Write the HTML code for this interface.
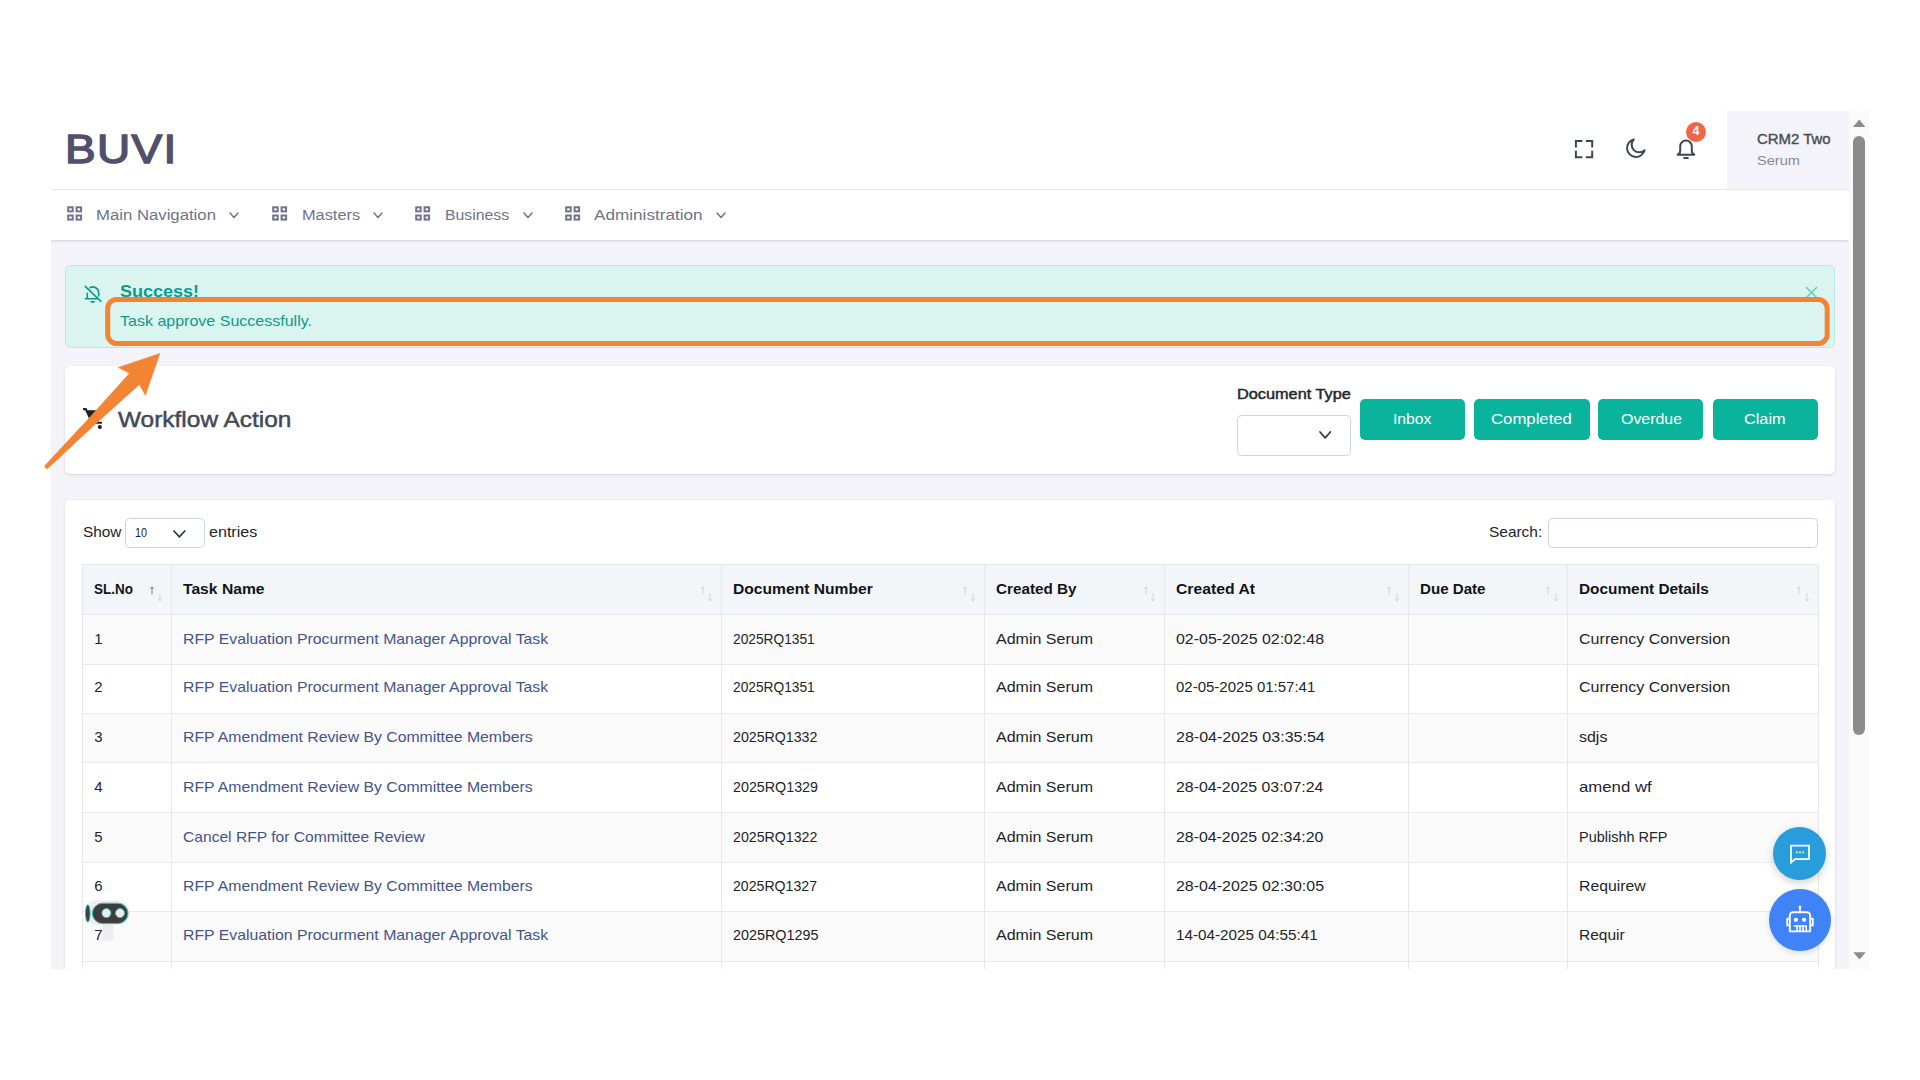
<!DOCTYPE html>
<html lang="en"><head><meta charset="utf-8"><title>Workflow Action</title><style>
html,body{margin:0;padding:0;background:#fff}
body{width:1920px;height:1080px;position:relative;overflow:hidden;font-family:"Liberation Sans",sans-serif}
.t{position:absolute;white-space:pre;display:block;transform-origin:0 0}
.ic{position:absolute;display:block;overflow:visible}
a{text-decoration:none}
h4,label,strong{margin:0;font-weight:400}
button{border:0;padding:0;margin:0;font:inherit;display:block}
input{margin:0;padding:0;outline:0;font:inherit;display:block}
.dt,.dt thead,.dt tbody,.dt tr,.dt th,.dt td{display:contents}
</style></head><body>
<div id="shot" style="position:absolute;left:0;top:0;width:1920px;height:969px;overflow:hidden;clip-path:inset(111px 51px 0 51px)">
<div style="position:absolute;left:51.00px;top:111.00px;width:1798.00px;height:858.00px;background:#f3f3f9"></div>
<header>
<div class="hdr" style="position:absolute;left:51.00px;top:111.00px;width:1798.00px;height:78.00px;background:#fff;border-bottom:1px solid #e9ebec"></div>
<div class="user" style="position:absolute;left:1727.00px;top:111.00px;width:122.00px;height:78.40px;background:#f3f3f9"></div>
<a class="t logo" style="left:65.14px;top:126px;line-height:46px;font-size:41.2px;color:#54506b;letter-spacing:1.200px;-webkit-text-stroke:1.5px #54506b;transform:scaleX(1.1149);">BUVI</a>
<span class="t" style="left:1757.22px;top:132px;line-height:16px;font-size:13.8px;color:#495057;-webkit-text-stroke:0.4px #495057;transform:scaleX(1.0835);">CRM2 Two</span>
<span class="t" style="left:1757.00px;top:154px;line-height:14px;font-size:12.6px;color:#878a99;transform:scaleX(1.1588);">Serum</span>
<svg class="ic" style="left:1572.1px;top:136.7px" width="24" height="24" viewBox="0 0 24 24" fill="none" stroke="#3e4652" stroke-width="2" stroke-linecap="butt"><path d="M3.9 10.4V3.9h6.5M13.8 3.9h6.4v6.5M20.2 13.8v6.4h-6.4M10.4 20.2H3.9v-6.4"/></svg>
<svg class="ic" style="left:1622.6px;top:136.4px" width="24" height="24" viewBox="0 0 24 24" fill="none" stroke="#3e4652" stroke-width="2" stroke-linejoin="round"><path d="M10.9 3.4a8.9 8.9 0 1 0 10.7 10.7 7.4 7.4 0 0 1-10.7-10.7z"/></svg>
<svg class="ic" style="left:1673.6px;top:136.9px" width="24" height="24" viewBox="0 0 24 24" fill="none" stroke="#3e4652" stroke-width="2" stroke-linejoin="round" stroke-linecap="round"><path d="M3.7 17.7c1.6-.7 2.5-1.7 2.5-3.6V9.3a5.8 5.8 0 0 1 11.6 0v4.8c0 1.9.9 2.9 2.5 3.6z"/><path d="M10.2 21.1h3.6"/></svg>
<div style="position:absolute;left:1685.90px;top:122.20px;width:20.20px;height:20.20px;background:#f06548;border-radius:50%"></div>
<span class="t" style="left:1692.60px;top:124px;line-height:14px;font-size:12.4px;color:#fff;font-weight:700;">4</span>
</header>
<nav>
<div class="nav" style="position:absolute;left:51.00px;top:190.00px;width:1798.00px;height:50.00px;background:#fff;box-shadow:0 1px 2.5px rgba(56,65,74,.18)"></div>
<svg class="ic" style="left:66.6px;top:206.4px" width="15.6" height="15" viewBox="0 0 15.6 15" fill="none" stroke="#70738a" stroke-width="2"><rect x="1.2" y="1.3" width="4.5" height="4.1"/><rect x="9.6" y="1.3" width="4.5" height="4.1"/><rect x="1.2" y="9.5" width="4.5" height="4.1"/><rect x="9.6" y="9.5" width="4.5" height="4.1"/></svg>
<a class="t" style="left:96.30px;top:206px;line-height:17px;font-size:15.4px;color:#70738a;transform:scaleX(1.0868);">Main Navigation</a>
<svg class="ic" style="left:228.2px;top:211.4px" width="12.0" height="8.4" viewBox="-2 -2 12.0 8.4" fill="none" stroke="#70738a" stroke-width="1.5" stroke-linecap="round" stroke-linejoin="round"><path d="M0 0L4.00 4.40L8.00 0"/></svg>
<svg class="ic" style="left:271.9px;top:206.4px" width="15.6" height="15" viewBox="0 0 15.6 15" fill="none" stroke="#70738a" stroke-width="2"><rect x="1.2" y="1.3" width="4.5" height="4.1"/><rect x="9.6" y="1.3" width="4.5" height="4.1"/><rect x="1.2" y="9.5" width="4.5" height="4.1"/><rect x="9.6" y="9.5" width="4.5" height="4.1"/></svg>
<a class="t" style="left:301.60px;top:206px;line-height:17px;font-size:15.4px;color:#70738a;transform:scaleX(1.0609);">Masters</a>
<svg class="ic" style="left:371.8px;top:211.4px" width="12.0" height="8.4" viewBox="-2 -2 12.0 8.4" fill="none" stroke="#70738a" stroke-width="1.5" stroke-linecap="round" stroke-linejoin="round"><path d="M0 0L4.00 4.40L8.00 0"/></svg>
<svg class="ic" style="left:415.4px;top:206.4px" width="15.6" height="15" viewBox="0 0 15.6 15" fill="none" stroke="#70738a" stroke-width="2"><rect x="1.2" y="1.3" width="4.5" height="4.1"/><rect x="9.6" y="1.3" width="4.5" height="4.1"/><rect x="1.2" y="9.5" width="4.5" height="4.1"/><rect x="9.6" y="9.5" width="4.5" height="4.1"/></svg>
<a class="t" style="left:445.30px;top:206px;line-height:17px;font-size:15.4px;color:#70738a;transform:scaleX(1.0257);">Business</a>
<svg class="ic" style="left:521.8px;top:211.4px" width="12.0" height="8.4" viewBox="-2 -2 12.0 8.4" fill="none" stroke="#70738a" stroke-width="1.5" stroke-linecap="round" stroke-linejoin="round"><path d="M0 0L4.00 4.40L8.00 0"/></svg>
<svg class="ic" style="left:564.7px;top:206.4px" width="15.6" height="15" viewBox="0 0 15.6 15" fill="none" stroke="#70738a" stroke-width="2"><rect x="1.2" y="1.3" width="4.5" height="4.1"/><rect x="9.6" y="1.3" width="4.5" height="4.1"/><rect x="1.2" y="9.5" width="4.5" height="4.1"/><rect x="9.6" y="9.5" width="4.5" height="4.1"/></svg>
<a class="t" style="left:593.80px;top:206px;line-height:17px;font-size:15.4px;color:#70738a;transform:scaleX(1.1140);">Administration</a>
<svg class="ic" style="left:715.0px;top:211.4px" width="12.0" height="8.4" viewBox="-2 -2 12.0 8.4" fill="none" stroke="#70738a" stroke-width="1.5" stroke-linecap="round" stroke-linejoin="round"><path d="M0 0L4.00 4.40L8.00 0"/></svg>
</nav>
<main>
<section class="alert-wrap" role="alert">
<div class="alert" style="position:absolute;left:65.30px;top:265.00px;width:1769.50px;height:82.90px;box-sizing:border-box;background:#daf4f0;border:1px solid #b9e9e2;border-radius:5px"></div>
<svg class="ic" style="left:83px;top:284px" width="20" height="20" viewBox="0 0 20 20" fill="none" stroke="#0c9b88" stroke-width="1.6" stroke-linecap="round" stroke-linejoin="round"><path d="M4.3 14.7V9.4M6.9 3.9a5.7 5.7 0 0 1 8.8 4.8v3.4M2.4 14.8h11.4M8.3 17.9h2.8M2.2 2.4L17.9 17.3"/></svg>
<strong class="t" style="left:119.90px;top:282px;line-height:18px;font-size:16.2px;color:#0c9b88;font-weight:700;transform:scaleX(1.1117);">Success!</strong>
<span class="t" style="left:119.70px;top:312px;line-height:17px;font-size:15px;color:#0c9b88;transform:scaleX(1.0678);">Task approve Successfully.</span>
<svg class="ic" style="left:1805.4px;top:285.9px" width="13" height="13" viewBox="0 0 13 13" fill="none" stroke="#63cdbd" stroke-width="1.5"><path d="M1 1l11 11M12 1L1 12"/></svg>
</section>
<section class="card-wrap">
<div class="card" style="position:absolute;left:65.30px;top:366.30px;width:1769.50px;height:107.70px;background:#fff;border-radius:5px;box-shadow:0 1px 2.5px rgba(56,65,74,.16)"></div>
<svg class="ic" style="left:82.05px;top:406.1px" width="25.2" height="25.2" viewBox="0 0 24 24" fill="#1d2228"><path d="M17,18C15.89,18 15,18.89 15,20A2,2 0 0,0 17,22A2,2 0 0,0 19,20C19,18.89 18.1,18 17,18M1,2V4H3L6.6,11.59L5.24,14.04C5.09,14.32 5,14.65 5,15A2,2 0 0,0 7,17H19V15H7.42A0.25,0.25 0 0,1 7.17,14.75C7.17,14.7 7.18,14.66 7.2,14.63L8.1,13H15.55C16.3,13 16.96,12.58 17.3,11.97L20.88,5.5C20.95,5.34 21,5.17 21,5A1,1 0 0,0 20,4H5.21L4.27,2M7,18C5.89,18 5,18.89 5,20A2,2 0 0,0 7,22A2,2 0 0,0 9,20C9,18.89 8.1,18 7,18Z"/></svg>
<h4 class="t" style="left:117.56px;top:408px;line-height:23px;font-size:21.2px;color:#414957;-webkit-text-stroke:0.45px #414957;transform:scaleX(1.1534);">Workflow Action</h4>
<label class="t" style="left:1237.15px;top:386px;line-height:16px;font-size:14.6px;color:#22262b;-webkit-text-stroke:0.45px #22262b;transform:scaleX(1.1164);">Document Type</label>
<div class="sel" style="position:absolute;left:1237.00px;top:414.60px;width:113.60px;height:41.20px;box-sizing:border-box;background:#fff;border:1px solid #ced4da;border-radius:4.5px"></div>
<svg class="ic" style="left:1317.8px;top:430.1px" width="14.4" height="9.8" viewBox="-2 -2 14.4 9.8" fill="none" stroke="#343a40" stroke-width="1.75" stroke-linecap="round" stroke-linejoin="round"><path d="M0 0L5.20 5.80L10.40 0"/></svg>
<button class="btn" type="button" style="position:absolute;left:1360.40px;top:399.40px;width:104.80px;height:41.00px;background:#0ab39c;border-radius:5px"><span class="t" style="left:33.00px;top:10.600000000000023px;line-height:17px;font-size:15.2px;color:#fff;transform:scaleX(1.0355);">Inbox</span></button>
<button class="btn" type="button" style="position:absolute;left:1474.00px;top:399.40px;width:116.00px;height:41.00px;background:#0ab39c;border-radius:5px"><span class="t" style="left:17.30px;top:10.600000000000023px;line-height:17px;font-size:15.2px;color:#fff;transform:scaleX(1.1019);">Completed</span></button>
<button class="btn" type="button" style="position:absolute;left:1598.00px;top:399.40px;width:105.00px;height:41.00px;background:#0ab39c;border-radius:5px"><span class="t" style="left:22.70px;top:10.600000000000023px;line-height:17px;font-size:15.2px;color:#fff;transform:scaleX(1.0482);">Overdue</span></button>
<button class="btn" type="button" style="position:absolute;left:1713.00px;top:399.40px;width:105.00px;height:41.00px;background:#0ab39c;border-radius:5px"><span class="t" style="left:31.40px;top:10.600000000000023px;line-height:17px;font-size:15.2px;color:#fff;transform:scaleX(1.0708);">Claim</span></button>
</section>
<section class="card-wrap">
<div class="card" style="position:absolute;left:65.30px;top:500.30px;width:1769.50px;height:499.70px;background:#fff;border-radius:5px;box-shadow:0 1px 2.5px rgba(56,65,74,.16)"></div>
<label class="t" style="left:82.50px;top:523px;line-height:17px;font-size:15px;color:#212529;transform:scaleX(1.0250);">Show</label>
<div class="sel" style="position:absolute;left:125.00px;top:518.20px;width:79.60px;height:30.20px;box-sizing:border-box;background:#fff;border:1px solid #ced4da;border-radius:4.5px"></div>
<span class="t" style="left:135.00px;top:526px;line-height:14px;font-size:12.4px;color:#212529;transform:scaleX(0.8703);">10</span>
<svg class="ic" style="left:172.0px;top:528.7px" width="14.8" height="9.9" viewBox="-2 -2 14.8 9.9" fill="none" stroke="#343a40" stroke-width="1.75" stroke-linecap="round" stroke-linejoin="round"><path d="M0 0L5.40 5.90L10.80 0"/></svg>
<label class="t" style="left:209.00px;top:523px;line-height:17px;font-size:15px;color:#212529;transform:scaleX(1.0719);">entries</label>
<label class="t" style="left:1488.80px;top:523px;line-height:17px;font-size:15px;color:#212529;transform:scaleX(1.0292);">Search:</label>
<input class="inp" type="search" aria-label="Search" style="position:absolute;left:1548.40px;top:518.00px;width:269.40px;height:30.40px;box-sizing:border-box;background:#fff;border:1px solid #ced4da;border-radius:4.5px">
<div class="thead" style="position:absolute;left:82.00px;top:564.30px;width:1736.00px;height:49.90px;background:#f3f6f9"></div>
<div class="odd" style="position:absolute;left:82.00px;top:614.30px;width:1736.00px;height:49.70px;background:#fafafa"></div>
<div class="odd" style="position:absolute;left:82.00px;top:713.60px;width:1736.00px;height:49.10px;background:#fafafa"></div>
<div class="odd" style="position:absolute;left:82.00px;top:812.30px;width:1736.00px;height:49.90px;background:#fafafa"></div>
<div class="odd" style="position:absolute;left:82.00px;top:911.70px;width:1736.00px;height:49.30px;background:#fafafa"></div>
<div class="hl" style="position:absolute;left:82.00px;top:564.00px;width:1736.00px;height:1.00px;background:#e6e8ea"></div>
<div class="hl" style="position:absolute;left:82.00px;top:614.00px;width:1736.00px;height:1.00px;background:#e6e8ea"></div>
<div class="hl" style="position:absolute;left:82.00px;top:664.00px;width:1736.00px;height:1.00px;background:#e6e8ea"></div>
<div class="hl" style="position:absolute;left:82.00px;top:713.00px;width:1736.00px;height:1.00px;background:#e6e8ea"></div>
<div class="hl" style="position:absolute;left:82.00px;top:762.00px;width:1736.00px;height:1.00px;background:#e6e8ea"></div>
<div class="hl" style="position:absolute;left:82.00px;top:812.00px;width:1736.00px;height:1.00px;background:#e6e8ea"></div>
<div class="hl" style="position:absolute;left:82.00px;top:862.00px;width:1736.00px;height:1.00px;background:#e6e8ea"></div>
<div class="hl" style="position:absolute;left:82.00px;top:911.00px;width:1736.00px;height:1.00px;background:#e6e8ea"></div>
<div class="hl" style="position:absolute;left:82.00px;top:961.00px;width:1736.00px;height:1.00px;background:#e6e8ea"></div>
<div class="vl" style="position:absolute;left:82.00px;top:564.30px;width:1.00px;height:435.70px;background:#e6e8ea"></div>
<div class="vl" style="position:absolute;left:171.00px;top:564.30px;width:1.00px;height:435.70px;background:#e6e8ea"></div>
<div class="vl" style="position:absolute;left:721.00px;top:564.30px;width:1.00px;height:435.70px;background:#e6e8ea"></div>
<div class="vl" style="position:absolute;left:984.00px;top:564.30px;width:1.00px;height:435.70px;background:#e6e8ea"></div>
<div class="vl" style="position:absolute;left:1164.00px;top:564.30px;width:1.00px;height:435.70px;background:#e6e8ea"></div>
<div class="vl" style="position:absolute;left:1408.00px;top:564.30px;width:1.00px;height:435.70px;background:#e6e8ea"></div>
<div class="vl" style="position:absolute;left:1567.00px;top:564.30px;width:1.00px;height:435.70px;background:#e6e8ea"></div>
<div class="vl" style="position:absolute;left:1818.00px;top:564.30px;width:1.00px;height:435.70px;background:#e6e8ea"></div>
<table class="dt"><thead><tr>
<th><span class="t" style="left:94.10px;top:581px;line-height:16px;font-size:14.6px;color:#111418;font-weight:700;transform:scaleX(0.9223);">SL.No</span><svg class="ic" style="left:149.3px;top:584.6px" width="6" height="11" viewBox="0 0 6 11" fill="none" stroke="#6c7886" stroke-width="0.95"><path d="M3 9.4V2M1.3 3.7L3 1.8l1.7 1.9"/></svg><svg class="ic" style="left:157.0px;top:591.6px" width="6" height="11" viewBox="0 0 6 11" fill="none" stroke="#ced1d6" stroke-width="0.95"><path d="M3 1.4V8.8M1.3 7.1L3 9l1.7-1.9"/></svg></th>
<th><span class="t" style="left:182.80px;top:581px;line-height:16px;font-size:14.6px;color:#111418;font-weight:700;transform:scaleX(1.0734);">Task Name</span><svg class="ic" style="left:699.6px;top:584.6px" width="6" height="11" viewBox="0 0 6 11" fill="none" stroke="#ced1d6" stroke-width="0.95"><path d="M3 9.4V2M1.3 3.7L3 1.8l1.7 1.9"/></svg><svg class="ic" style="left:707.3px;top:591.6px" width="6" height="11" viewBox="0 0 6 11" fill="none" stroke="#ced1d6" stroke-width="0.95"><path d="M3 1.4V8.8M1.3 7.1L3 9l1.7-1.9"/></svg></th>
<th><span class="t" style="left:733.40px;top:581px;line-height:16px;font-size:14.6px;color:#111418;font-weight:700;transform:scaleX(1.0705);">Document Number</span><svg class="ic" style="left:962.3px;top:584.6px" width="6" height="11" viewBox="0 0 6 11" fill="none" stroke="#ced1d6" stroke-width="0.95"><path d="M3 9.4V2M1.3 3.7L3 1.8l1.7 1.9"/></svg><svg class="ic" style="left:970.0px;top:591.6px" width="6" height="11" viewBox="0 0 6 11" fill="none" stroke="#ced1d6" stroke-width="0.95"><path d="M3 1.4V8.8M1.3 7.1L3 9l1.7-1.9"/></svg></th>
<th><span class="t" style="left:996.40px;top:581px;line-height:16px;font-size:14.6px;color:#111418;font-weight:700;transform:scaleX(1.0456);">Created By</span><svg class="ic" style="left:1142.6px;top:584.6px" width="6" height="11" viewBox="0 0 6 11" fill="none" stroke="#ced1d6" stroke-width="0.95"><path d="M3 9.4V2M1.3 3.7L3 1.8l1.7 1.9"/></svg><svg class="ic" style="left:1150.3px;top:591.6px" width="6" height="11" viewBox="0 0 6 11" fill="none" stroke="#ced1d6" stroke-width="0.95"><path d="M3 1.4V8.8M1.3 7.1L3 9l1.7-1.9"/></svg></th>
<th><span class="t" style="left:1175.80px;top:581px;line-height:16px;font-size:14.6px;color:#111418;font-weight:700;transform:scaleX(1.0792);">Created At</span><svg class="ic" style="left:1386.0px;top:584.6px" width="6" height="11" viewBox="0 0 6 11" fill="none" stroke="#ced1d6" stroke-width="0.95"><path d="M3 9.4V2M1.3 3.7L3 1.8l1.7 1.9"/></svg><svg class="ic" style="left:1393.7px;top:591.6px" width="6" height="11" viewBox="0 0 6 11" fill="none" stroke="#ced1d6" stroke-width="0.95"><path d="M3 1.4V8.8M1.3 7.1L3 9l1.7-1.9"/></svg></th>
<th><span class="t" style="left:1420.20px;top:581px;line-height:16px;font-size:14.6px;color:#111418;font-weight:700;transform:scaleX(1.0349);">Due Date</span><svg class="ic" style="left:1545.0px;top:584.6px" width="6" height="11" viewBox="0 0 6 11" fill="none" stroke="#ced1d6" stroke-width="0.95"><path d="M3 9.4V2M1.3 3.7L3 1.8l1.7 1.9"/></svg><svg class="ic" style="left:1552.7px;top:591.6px" width="6" height="11" viewBox="0 0 6 11" fill="none" stroke="#ced1d6" stroke-width="0.95"><path d="M3 1.4V8.8M1.3 7.1L3 9l1.7-1.9"/></svg></th>
<th><span class="t" style="left:1578.60px;top:581px;line-height:16px;font-size:14.6px;color:#111418;font-weight:700;transform:scaleX(1.0534);">Document Details</span><svg class="ic" style="left:1796.0px;top:584.6px" width="6" height="11" viewBox="0 0 6 11" fill="none" stroke="#ced1d6" stroke-width="0.95"><path d="M3 9.4V2M1.3 3.7L3 1.8l1.7 1.9"/></svg><svg class="ic" style="left:1803.7px;top:591.6px" width="6" height="11" viewBox="0 0 6 11" fill="none" stroke="#ced1d6" stroke-width="0.95"><path d="M3 1.4V8.8M1.3 7.1L3 9l1.7-1.9"/></svg></th>
</tr></thead><tbody>
<tr><td><span class="t" style="left:94.20px;top:630px;line-height:17px;font-size:15px;color:#212529;">1</span></td><td><a class="t" style="left:182.60px;top:630px;line-height:17px;font-size:15px;color:#43548d;transform:scaleX(1.0545);">RFP Evaluation Procurment Manager Approval Task</a></td><td><span class="t" style="left:733.40px;top:630px;line-height:17px;font-size:15px;color:#212529;transform:scaleX(0.9156);">2025RQ1351</span></td><td><span class="t" style="left:996.40px;top:630px;line-height:17px;font-size:15px;color:#212529;transform:scaleX(1.0675);">Admin Serum</span></td><td><span class="t" style="left:1176.00px;top:630px;line-height:17px;font-size:15px;color:#212529;transform:scaleX(1.0625);">02-05-2025 02:02:48</span></td><td></td><td><span class="t" style="left:1578.60px;top:630px;line-height:17px;font-size:15px;color:#212529;transform:scaleX(1.0724);">Currency Conversion</span></td></tr>
<tr><td><span class="t" style="left:94.20px;top:678px;line-height:17px;font-size:15px;color:#212529;">2</span></td><td><a class="t" style="left:182.60px;top:678px;line-height:17px;font-size:15px;color:#43548d;transform:scaleX(1.0545);">RFP Evaluation Procurment Manager Approval Task</a></td><td><span class="t" style="left:733.40px;top:678px;line-height:17px;font-size:15px;color:#212529;transform:scaleX(0.9156);">2025RQ1351</span></td><td><span class="t" style="left:996.40px;top:678px;line-height:17px;font-size:15px;color:#212529;transform:scaleX(1.0675);">Admin Serum</span></td><td><span class="t" style="left:1176.00px;top:678px;line-height:17px;font-size:15px;color:#212529;">02-05-2025 01:57:41</span></td><td></td><td><span class="t" style="left:1578.60px;top:678px;line-height:17px;font-size:15px;color:#212529;transform:scaleX(1.0724);">Currency Conversion</span></td></tr>
<tr><td><span class="t" style="left:94.20px;top:728px;line-height:17px;font-size:15px;color:#212529;">3</span></td><td><a class="t" style="left:182.60px;top:728px;line-height:17px;font-size:15px;color:#43548d;transform:scaleX(1.0523);">RFP Amendment Review By Committee Members</a></td><td><span class="t" style="left:733.40px;top:728px;line-height:17px;font-size:15px;color:#212529;transform:scaleX(0.9458);">2025RQ1332</span></td><td><span class="t" style="left:996.40px;top:728px;line-height:17px;font-size:15px;color:#212529;transform:scaleX(1.0675);">Admin Serum</span></td><td><span class="t" style="left:1176.00px;top:728px;line-height:17px;font-size:15px;color:#212529;transform:scaleX(1.0676);">28-04-2025 03:35:54</span></td><td></td><td><span class="t" style="left:1578.60px;top:728px;line-height:17px;font-size:15px;color:#212529;transform:scaleX(1.0649);">sdjs</span></td></tr>
<tr><td><span class="t" style="left:94.20px;top:778px;line-height:17px;font-size:15px;color:#212529;">4</span></td><td><a class="t" style="left:182.60px;top:778px;line-height:17px;font-size:15px;color:#43548d;transform:scaleX(1.0523);">RFP Amendment Review By Committee Members</a></td><td><span class="t" style="left:733.40px;top:778px;line-height:17px;font-size:15px;color:#212529;transform:scaleX(0.9525);">2025RQ1329</span></td><td><span class="t" style="left:996.40px;top:778px;line-height:17px;font-size:15px;color:#212529;transform:scaleX(1.0675);">Admin Serum</span></td><td><span class="t" style="left:1176.00px;top:778px;line-height:17px;font-size:15px;color:#212529;transform:scaleX(1.0575);">28-04-2025 03:07:24</span></td><td></td><td><span class="t" style="left:1578.60px;top:778px;line-height:17px;font-size:15px;color:#212529;transform:scaleX(1.1173);">amend wf</span></td></tr>
<tr><td><span class="t" style="left:94.20px;top:828px;line-height:17px;font-size:15px;color:#212529;">5</span></td><td><a class="t" style="left:182.60px;top:828px;line-height:17px;font-size:15px;color:#43548d;transform:scaleX(1.0403);">Cancel RFP for Committee Review</a></td><td><span class="t" style="left:733.40px;top:828px;line-height:17px;font-size:15px;color:#212529;transform:scaleX(0.9458);">2025RQ1322</span></td><td><span class="t" style="left:996.40px;top:828px;line-height:17px;font-size:15px;color:#212529;transform:scaleX(1.0675);">Admin Serum</span></td><td><span class="t" style="left:1176.00px;top:828px;line-height:17px;font-size:15px;color:#212529;transform:scaleX(1.0575);">28-04-2025 02:34:20</span></td><td></td><td><span class="t" style="left:1578.60px;top:828px;line-height:17px;font-size:15px;color:#212529;transform:scaleX(0.9639);">Publishh RFP</span></td></tr>
<tr><td><span class="t" style="left:94.20px;top:877px;line-height:17px;font-size:15px;color:#212529;">6</span></td><td><a class="t" style="left:182.60px;top:877px;line-height:17px;font-size:15px;color:#43548d;transform:scaleX(1.0523);">RFP Amendment Review By Committee Members</a></td><td><span class="t" style="left:733.40px;top:877px;line-height:17px;font-size:15px;color:#212529;transform:scaleX(0.9413);">2025RQ1327</span></td><td><span class="t" style="left:996.40px;top:877px;line-height:17px;font-size:15px;color:#212529;transform:scaleX(1.0675);">Admin Serum</span></td><td><span class="t" style="left:1176.00px;top:877px;line-height:17px;font-size:15px;color:#212529;transform:scaleX(1.0625);">28-04-2025 02:30:05</span></td><td></td><td><span class="t" style="left:1578.60px;top:877px;line-height:17px;font-size:15px;color:#212529;transform:scaleX(1.0520);">Requirew</span></td></tr>
<tr><td><span class="t" style="left:94.20px;top:926px;line-height:17px;font-size:15px;color:#212529;">7</span></td><td><a class="t" style="left:182.60px;top:926px;line-height:17px;font-size:15px;color:#43548d;transform:scaleX(1.0545);">RFP Evaluation Procurment Manager Approval Task</a></td><td><span class="t" style="left:733.40px;top:926px;line-height:17px;font-size:15px;color:#212529;transform:scaleX(0.9570);">2025RQ1295</span></td><td><span class="t" style="left:996.40px;top:926px;line-height:17px;font-size:15px;color:#212529;transform:scaleX(1.0675);">Admin Serum</span></td><td><span class="t" style="left:1176.00px;top:926px;line-height:17px;font-size:15px;color:#212529;transform:scaleX(1.0173);">14-04-2025 04:55:41</span></td><td></td><td><span class="t" style="left:1578.60px;top:926px;line-height:17px;font-size:15px;color:#212529;transform:scaleX(1.0342);">Requir</span></td></tr>
</tbody></table>
</section>
</main>
<div class="fab" style="position:absolute;left:1772.90px;top:826.90px;width:53.40px;height:53.40px;background:#299cdb;border-radius:50%;box-shadow:0 3px 8px rgba(0,0,0,.18)"></div>
<svg class="ic" style="left:1787.6px;top:842px" width="24" height="24" viewBox="0 0 24 24" fill="none" stroke="#fff" stroke-width="1.7" stroke-linejoin="miter"><path d="M3 3.6h18v13.6H7L3 20.6z"/><path d="M8 10.4h1.6M11.2 10.4h1.6M14.4 10.4h1.6" stroke-width="1.8"/></svg>
<div class="fab" style="position:absolute;left:1768.60px;top:889.20px;width:62.20px;height:62.00px;background:#3f83f6;border-radius:50%;box-shadow:0 2px 6px rgba(0,0,0,.12)"></div>
<svg class="ic" style="left:1784.6px;top:903.6px" width="30" height="32" viewBox="0 0 30 32" fill="none" stroke="#fff" stroke-width="1.9" stroke-linejoin="round"><path d="M15 2.6v5.4" stroke-width="1.7"/><circle cx="15" cy="2.9" r="1.5" fill="#fff" stroke="none"/><path d="M8 8.2h14a3.2 3.2 0 0 1 3.2 3.2v16H4.8v-16a3.2 3.2 0 0 1 3.2-3.2z"/><path d="M4.6 14.6H2.2v6.8h2.4M25.4 14.6h2.4v6.8h-2.4"/><circle cx="10.9" cy="15.8" r="2.1" fill="#fff" stroke="none"/><circle cx="19.1" cy="15.8" r="2.1" fill="#fff" stroke="none"/><path d="M8.8 22h12.4v5M12 22.2v5M15 22.2v5M18 22.2v5" stroke-width="1.6"/></svg>
<svg class="ic" style="left:83px;top:899px" width="50" height="44" viewBox="83 899 50 44"><rect x="103" y="922" width="10.4" height="18.6" fill="#eeeeee"/><rect x="85" y="900.6" width="44.8" height="24.2" rx="12" fill="#ededed"/><ellipse cx="87.8" cy="913.4" rx="2.3" ry="8.6" fill="#413d3e" stroke="#2fc7ba" stroke-width="1"/><rect x="92.4" y="903.2" width="35.6" height="20.4" rx="10.2" fill="#413d3e" stroke="#2fc7ba" stroke-width="1"/><circle cx="106.4" cy="913.1" r="4.5" fill="#ececec" stroke="#2fc7ba" stroke-width=".9"/><circle cx="120" cy="913.1" r="4.5" fill="#ececec" stroke="#2fc7ba" stroke-width=".9"/></svg>
<div class="sbt" style="position:absolute;left:1849.00px;top:111.00px;width:20.00px;height:858.00px;background:#fafafb"></div>
<svg class="ic" style="left:1852px;top:118px" width="15" height="10" viewBox="0 0 15 10"><path d="M1 8.9L7.2 1.6l6.2 7.3z" fill="#8b8b8b"/></svg>
<div class="sbth" style="position:absolute;left:1853.00px;top:136.10px;width:12.40px;height:599.10px;background:#8b8b8b;border-radius:6.2px"></div>
<svg class="ic" style="left:1852px;top:951px" width="15" height="10" viewBox="0 0 15 10"><path d="M1.3 1.3L7.5 8.4l6.2-7.1z" fill="#8b8b8b"/></svg>
</div>
<svg class="ic" style="left:0;top:0" width="1920" height="1080" viewBox="0 0 1920 1080"><rect x="107.7" y="299.5" width="1719.5" height="44" rx="9" ry="9" fill="none" stroke="#f28433" stroke-width="5"/><path d="M45.5 464.9Q88 420 129.6 373.2L118.3 367.6L159.8 353.5L145.4 395.3L139.4 384.4Q93 425.4 48.3 467.9A2 2 0 0 1 45.5 464.9z" fill="#f28433" stroke="#f28433" stroke-width="0.6" stroke-linejoin="round"/></svg>
</body></html>
